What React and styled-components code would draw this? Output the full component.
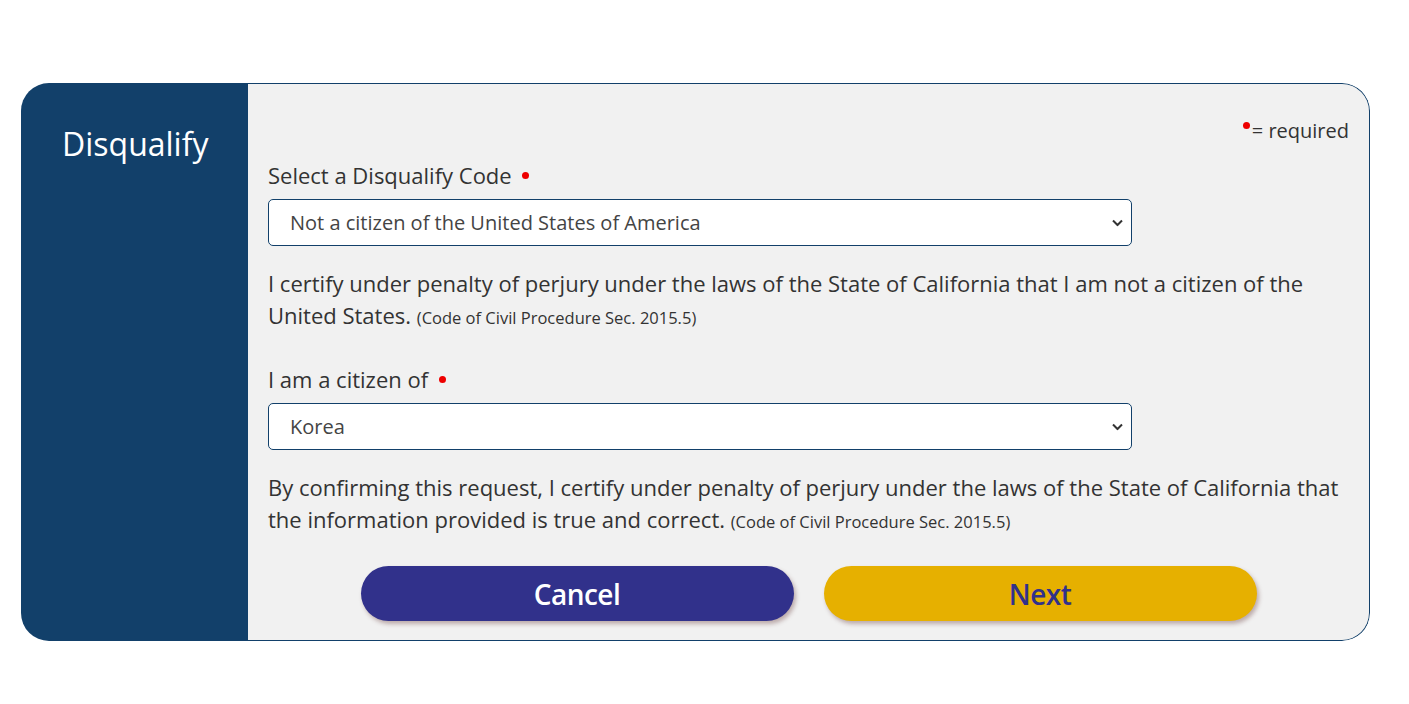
import React from 'react';
import styled, { createGlobalStyle } from 'styled-components';

const GlobalStyle = createGlobalStyle`
	body {
		margin: 0;
		background: #ffffff;
		font-family: "Open Sans", "Noto Sans", sans-serif;
	}
`;

const Page = styled.div`
	padding: 83px 39px 62px 21px;
`;

const Card = styled.div`
	display: flex;
	height: 558px;
	border-radius: 28px;
	overflow: hidden;
`;

const Sidebar = styled.aside`
	width: 227px;
	flex-shrink: 0;
	background: #12406a;
	padding: 39px 0 0 41px;
	box-sizing: border-box;
	h2 {
		margin: 0;
		font-size: 32px;
		font-weight: 400;
		line-height: 44px;
		color: #ffffff;
	}
`;

const Panel = styled.section`
	flex: 1;
	background: #f1f1f1;
	border: 1px solid #12406a;
	border-left: none;
	border-radius: 0 28px 28px 0;
	padding: 33px 20px 0 20px;
	color: #333333;
`;

const Legend = styled.div`
	text-align: right;
	font-size: 20px;
	line-height: 28px;
	color: #333333;
`;

const Dot = styled.span`
	display: inline-block;
	width: 7px;
	height: 7px;
	border-radius: 50%;
	background: #ee0000;
	vertical-align: ${(p) => (p.$raised ? '9px' : '5px')};
	margin-left: ${(p) => (p.$raised ? '0' : '5px')};
	margin-right: ${(p) => (p.$raised ? '2px' : '0')};
`;

const Field = styled.div`
	margin-top: ${(p) => p.$top || 0}px;
`;

const Label = styled.label`
	display: block;
	font-size: 22px;
	line-height: 28px;
	color: #333333;
	margin-bottom: 10px;
`;

const SelectBox = styled.div`
	position: relative;
	width: 864px;
	height: 47px;
	box-sizing: border-box;
	background: #ffffff;
	border: 1px solid #12406a;
	border-radius: 5px;
	display: flex;
	align-items: center;
	padding: 0 21px;
	font-size: 20px;
	color: #444444;
	svg {
		position: absolute;
		right: 8px;
		top: 50%;
		transform: translateY(-50%);
	}
`;

const Statement = styled.p`
	margin: 21px 0 0;
	font-size: 22px;
	line-height: 32px;
	color: #333333;
	small {
		font-size: 16.5px;
		line-height: 1;
	}
`;

const Actions = styled.div`
	display: flex;
	justify-content: center;
	gap: 30px;
	margin-top: 31px;
`;

const Button = styled.button`
	width: 433px;
	height: 55px;
	border: none;
	border-radius: 28px;
	font-family: "Open Sans", sans-serif;
	font-size: 28px;
	font-weight: 600;
	letter-spacing: -0.5px;
	cursor: pointer;
	box-shadow: 2px 3px 4px rgba(90, 40, 40, 0.35);
	background: ${(p) => (p.$primary ? '#e6b000' : '#31318b')};
	color: ${(p) => (p.$primary ? '#31318b' : '#ffffff')};
`;

const Chevron = () => (
	<svg width="11" height="7" viewBox="0 0 11 7" fill="none">
		<path d="M1 1l4.5 4.5L10 1" stroke="#333" strokeWidth="2" />
	</svg>
);

const Select = ({ value }) => (
	<SelectBox>
		{value}
		<Chevron />
	</SelectBox>
);

const App = () => {
	return (
		<Page>
			<GlobalStyle />
			<Card>
				<Sidebar>
					<h2>Disqualify</h2>
				</Sidebar>
				<Panel>
					<Legend>
						<Dot $raised />= required
					</Legend>
					<Field $top={16}>
						<Label>
							Select a Disqualify Code <Dot />
						</Label>
						<Select value="Not a citizen of the United States of America" />
					</Field>
					<Statement>
						I certify under penalty of perjury under the laws of the State of California that I am not a
						citizen of the United States. <small>(Code of Civil Procedure Sec. 2015.5)</small>
					</Statement>
					<Field $top={34}>
						<Label>
							I am a citizen of <Dot />
						</Label>
						<Select value="Korea" />
					</Field>
					<Statement>
						By confirming this request, I certify under penalty of perjury under the laws of the State of
						California that the information provided is true and correct.{' '}
						<small>(Code of Civil Procedure Sec. 2015.5)</small>
					</Statement>
					<Actions>
						<Button>Cancel</Button>
						<Button $primary>Next</Button>
					</Actions>
				</Panel>
			</Card>
		</Page>
	);
};

export default App;
